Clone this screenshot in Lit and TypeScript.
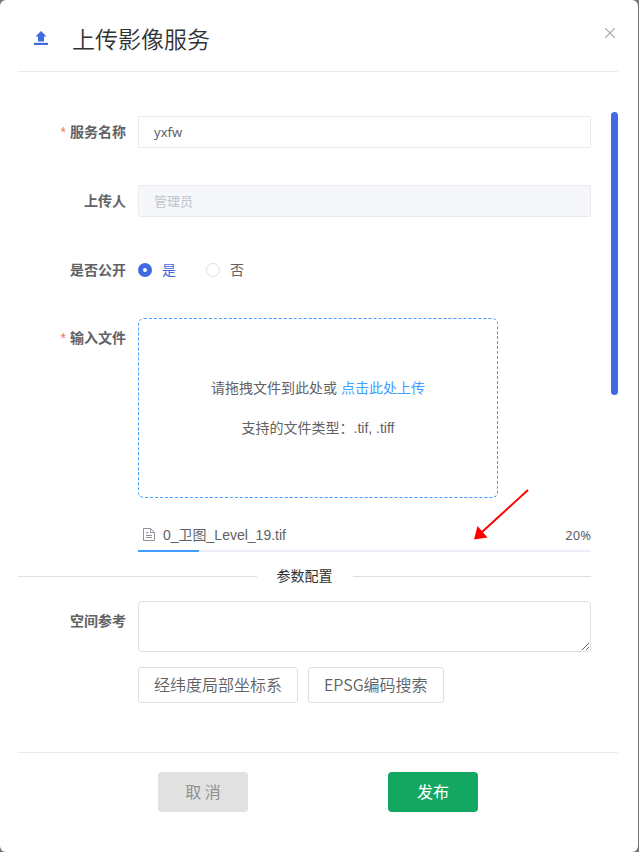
import { LitElement, html, css } from "lit";
import { customElement, state } from "lit/decorators.js";

@customElement("app-root")
export class AppRoot extends LitElement {
  @state() private isPublic = true;
  @state() private progress = 20;

  static styles = css`
    :host {
      display: block;
      min-height: 100vh;
      background: #777;
      color: #606266;
      font: 14px/20px "Liberation Sans", "Noto Sans CJK SC", sans-serif;
    }
    * {
      box-sizing: border-box;
    }
    .dialog {
      display: flex;
      flex-direction: column;
      min-height: 100vh;
      margin-right: 1px;
      padding: 0 20px 0 18px;
      background: #fff;
      border-radius: 6px;
    }
    .head {
      display: flex;
      align-items: center;
      height: 72px;
      padding: 4px 0 0 16px;
      border-bottom: 1px solid #ebebeb;
    }
    .head h1 {
      flex: 1;
      margin: 0 0 0 24px;
      font: 350 23px/32px "Noto Sans CJK SC", sans-serif;
      color: #303133;
    }
    .head svg {
      display: block;
    }
    .close {
      align-self: flex-start;
      padding: 24px 3px;
      border: 0;
      background: none;
      cursor: pointer;
    }
    .body {
      display: grid;
      grid-template-columns: minmax(0, 1fr) 7px;
      column-gap: 20px;
      margin: 40px 0 auto;
    }
    .bar {
      height: 283px;
      border-radius: 4px;
      background: #4169e1;
    }
    .row {
      display: grid;
      grid-template-columns: 108px minmax(0, 1fr);
      column-gap: 12px;
      margin-bottom: 29px;
    }
    .row.last {
      margin: 0;
    }
    .row.radios {
      margin-bottom: 28px;
    }
    .label {
      font-weight: 700;
      line-height: 40px;
      text-align: right;
    }
    .required::before {
      content: "*";
      margin-right: 4px;
      color: #f56c6c;
      font-weight: 400;
    }
    .text {
      align-self: center;
      width: 100%;
      height: 32px;
      padding: 0 15px;
      border: 1px solid #ebebeb;
      border-radius: 2px;
      background: #fff;
      color: #606266;
      font: 13px/20px "Noto Sans", "Noto Sans CJK SC", sans-serif;
    }
    .text:disabled {
      padding-bottom: 2px;
      background: #f5f7fa;
      color: #c0c4cc;
    }
    .options {
      display: flex;
      align-items: center;
      gap: 30px;
      height: 40px;
    }
    .option {
      display: flex;
      align-items: center;
      gap: 10px;
    }
    .option.on {
      color: #4169e1;
    }
    .option input {
      appearance: none;
      width: 14px;
      height: 14px;
      margin: 0;
      border: 1px solid #dcdfe6;
      border-radius: 50%;
      background: #fff;
    }
    .option input:checked {
      border: 5px solid #4169e1;
    }
    .drop {
      display: flex;
      flex-direction: column;
      align-items: center;
      justify-content: center;
      gap: 20px;
      max-width: 360px;
      height: 180px;
      border: 1px dashed #409eff;
      border-radius: 6px;
    }
    .drop p {
      margin: 0;
    }
    .drop a {
      color: #409eff;
      text-decoration: none;
    }
    .file {
      display: flex;
      align-items: center;
      gap: 8px;
      margin-top: 27px;
      padding-left: 5px;
    }
    .file .name {
      flex: 1;
    }
    .file .percent {
      font: 13px/20px "Noto Sans", sans-serif;
    }
    .track {
      height: 2px;
      margin-top: 5px;
      background: #ebeef5;
    }
    .fill {
      height: 2px;
      background: #409eff;
    }
    .divider {
      display: flex;
      align-items: center;
      gap: 20px;
      margin: 14px 0 15px;
      color: #303133;
    }
    .divider::before,
    .divider::after {
      content: "";
      flex: 1;
      height: 1px;
      background: #dcdfe6;
    }
    .area {
      display: block;
      width: 100%;
      height: 51px;
      padding: 5px 15px;
      border: 1px solid #dcdfe6;
      border-radius: 4px;
      background: #fff;
      color: #606266;
      font: inherit;
      resize: vertical;
    }
    .tools {
      display: flex;
      flex-wrap: wrap;
      gap: 10px;
      margin-top: 15px;
    }
    .tool {
      height: 36px;
      padding: 0 15px 2px;
      border: 1px solid #dcdfe6;
      border-radius: 3px;
      background: #fff;
      color: #606266;
      font: 350 16px/24px "Noto Sans CJK SC", sans-serif;
      cursor: pointer;
    }
    .foot {
      display: flex;
      justify-content: center;
      gap: 140px;
      margin-top: 48px;
      padding: 19px 0 40px;
      border-top: 1px solid #ebebeb;
    }
    .foot button {
      width: 90px;
      height: 40px;
      padding: 0 0 2px;
      border: 0;
      border-radius: 4px;
      font: 16px/24px "Noto Sans CJK SC", sans-serif;
      cursor: pointer;
    }
    .foot .cancel {
      background: #e1e1e1;
      color: #909090;
    }
    .foot .publish {
      background: #13a762;
      color: #fff;
    }
    .upload {
      position: relative;
    }
    .arrow {
      position: absolute;
      right: 62px;
      bottom: 12px;
      pointer-events: none;
    }
  `;

  render() {
    return html`
      <main class="dialog">
        <header class="head">
          <svg width="14" height="14" viewBox="0 0 14 14" fill="#4169e1" aria-hidden="true">
            <path d="M7 0 12.500 5.500H10V10.500H4V5.500H1.500Z" />
            <path d="M0 11.800H14V14H0Z" />
          </svg>
          <h1>上传影像服务</h1>
          <button class="close" type="button" aria-label="关闭">
            <svg width="10" height="10" viewBox="0 0 10 10" fill="none" stroke="#a3a6ab" stroke-width="1.200">
              <path d="M0 0 10 10M10 0 0 10" />
            </svg>
          </button>
        </header>

        <div class="body">
          <form>
            <div class="row">
              <label class="label required" for="name">服务名称</label>
              <input class="text" id="name" type="text" value="yxfw" required />
            </div>
            <div class="row">
              <label class="label" for="owner">上传人</label>
              <input class="text" id="owner" type="text" value="管理员" disabled />
            </div>
            <div class="row radios" role="radiogroup" aria-labelledby="public">
              <span class="label" id="public">是否公开</span>
              <div class="options">
                ${this.option("是", true)} ${this.option("否", false)}
              </div>
            </div>
            <div class="row last">
              <span class="label required">输入文件</span>
              <div class="upload">
                <div class="drop">
                  <p>请拖拽文件到此处或 <a href="#upload">点击此处上传</a></p>
                  <p>支持的文件类型：.tif, .tiff</p>
                </div>
                <div class="file">
                  <svg width="12" height="14" viewBox="0 0 12 14" fill="none" stroke="#909399" aria-hidden="true">
                    <path d="M.5 .5H7.500L11.500 4.500V12.500H.5ZM7.500 .5V4.500H11.500M3 4.500H5.500M3 7.500H9M3 9.500H9" />
                  </svg>
                  <span class="name">0_卫图_Level_19.tif</span>
                  <span class="percent">${this.progress}%</span>
                </div>
                <div class="track">
                  <div class="fill" style="width:${this.progress * 0.6775}%"></div>
                </div>
                <svg class="arrow" width="56" height="52" viewBox="0 0 56 52" aria-hidden="true">
                  <path d="M55 2 9 44" stroke="#f00" stroke-width="2" />
                  <path d="M1 51.500 4.500 38 14.500 49.500Z" fill="#f00" />
                </svg>
              </div>
            </div>
            <div class="divider">参数配置</div>
            <div class="row last">
              <label class="label" for="srs">空间参考</label>
              <div>
                <textarea class="area" id="srs"></textarea>
                <div class="tools">
                  <button class="tool" type="button">经纬度局部坐标系</button>
                  <button class="tool" type="button">EPSG编码搜索</button>
                </div>
              </div>
            </div>
          </form>
          <div class="bar"></div>
        </div>

        <footer class="foot">
          <button class="cancel" type="button">取 消</button>
          <button class="publish" type="button">发布</button>
        </footer>
      </main>
    `;
  }

  private option(text: string, value: boolean) {
    const on = this.isPublic === value;
    return html`<label class="option ${on ? "on" : ""}">
      <input type="radio" name="public" .checked=${on} @change=${() => (this.isPublic = value)} />${text}
    </label>`;
  }
}
